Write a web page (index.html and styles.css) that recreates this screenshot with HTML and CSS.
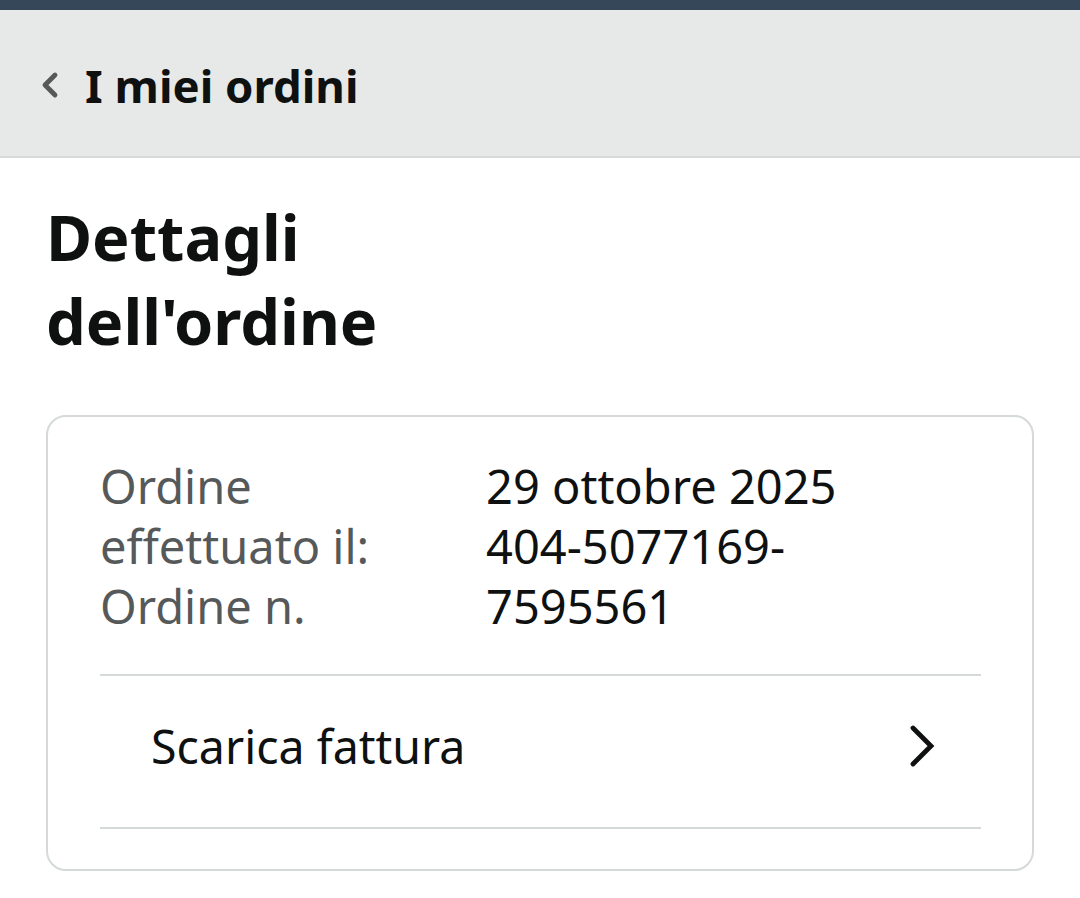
FILE: index.html
```html
<!DOCTYPE html>
<html lang="it">
<head>
<meta charset="utf-8">
<title>Dettagli dell'ordine</title>
<link rel="stylesheet" href="styles.css">
</head>
<body>
<div class="topbar"></div>
<header class="header">
  <svg class="back" width="20" height="28" viewBox="0 0 20 28" aria-hidden="true"><path d="M15 4 L5 14 L15 24" fill="none" stroke="#565959" stroke-width="4.8" stroke-linecap="round" stroke-linejoin="round"/></svg>
  <span class="header-title">I miei ordini</span>
</header>
<main class="main">
  <h1 class="title">Dettagli<br>dell'ordine</h1>
  <section class="card">
    <div class="info">
      <div class="labels">
        <div>Ordine effettuato il:</div>
        <div>Ordine n.</div>
      </div>
      <div class="values">
        <div>29 ottobre 2025</div>
        <div>404-5077169-7595561</div>
      </div>
    </div>
    <div class="link-row">
      <span>Scarica fattura</span>
      <svg class="chev" width="30" height="44" viewBox="0 0 30 44" aria-hidden="true"><path d="M6 4 L24 22 L6 40" fill="none" stroke="#0f1111" stroke-width="4.8" stroke-linecap="round" stroke-linejoin="miter"/></svg>
    </div>
  </section>
</main>
</body>
</html>
```

FILE: styles.css
```css
* { box-sizing: border-box; }
html, body { margin: 0; padding: 0; background: #fff; }
body {
  font-family: "Noto Sans", "Open Sans", sans-serif;
  color: #0f1111;
  width: 1080px;
}
.topbar { height: 10px; background: #37475a; }
.header {
  height: 148px;
  background: #e7e9e9;
  border-bottom: 2px solid #d5d9d9;
  display: flex;
  align-items: center;
  padding: 3px 0 0 40px;
}
.back { margin-right: 25px; }
.header-title {
  font-size: 45.5px;
  font-weight: 700;
  color: #0f1111;
}
.main { padding: 37px 46px 0 46px; }
.title {
  margin: 0;
  font-size: 63px;
  line-height: 84px;
  font-weight: 700;
}
.card {
  margin-top: 52px;
  width: 988px;
  border: 2px solid #d5d9d9;
  border-radius: 20px;
  padding: 39px 51px 40px 52px;
}
.info {
  display: flex;
  font-size: 47px;
  line-height: 60px;
  padding-bottom: 38px;
  border-bottom: 2px solid #d5d9d9;
}
.labels { width: 386px; color: #565959; padding-right: 30px; }
.values { width: 440px; color: #0f1111; }
.link-row {
  height: 153px;
  display: flex;
  align-items: center;
  justify-content: space-between;
  padding: 0 44px 12px 51px;
  border-bottom: 2px solid #d5d9d9;
  font-size: 46.5px;
}
.chev { display: block; }
```
